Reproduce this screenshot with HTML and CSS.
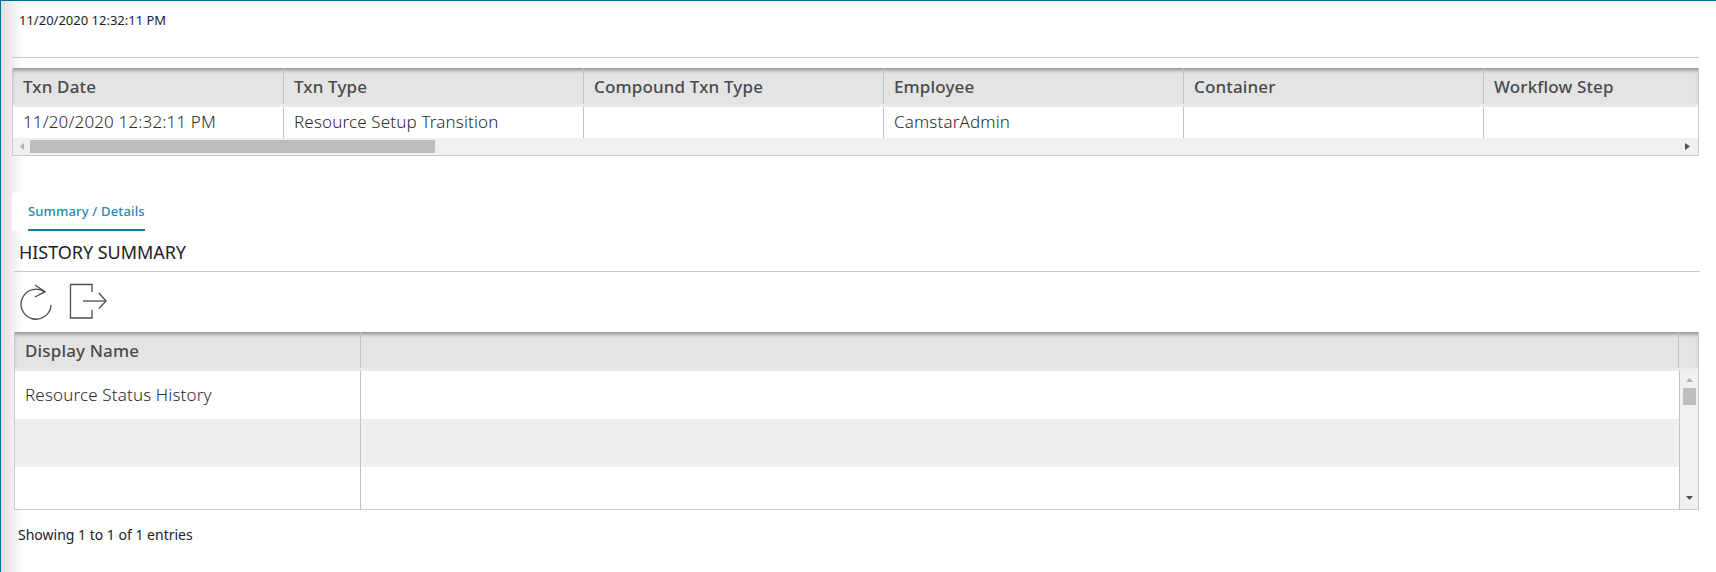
FILE: index.html
```html
<!DOCTYPE html>
<html>
  <head>
    <title>Resource History</title>
    <link rel="stylesheet" href="styles.css">
  </head>
  <body>
    <div class="page">
      <div class="stamp">11/20/2020 12:32:11 PM</div>
      <div class="rule rule-top"></div>

      <div class="grid txn-grid">
        <div class="row head">
          <div class="cell">Txn Date</div>
          <div class="cell">Txn Type</div>
          <div class="cell">Compound Txn Type</div>
          <div class="cell">Employee</div>
          <div class="cell">Container</div>
          <div class="cell last">Workflow Step</div>
        </div>
        <div class="row body-row">
          <div class="cell">11/20/2020 12:32:11 PM</div>
          <div class="cell">Resource Setup Transition</div>
          <div class="cell"></div>
          <div class="cell">CamstarAdmin</div>
          <div class="cell"></div>
          <div class="cell last"></div>
        </div>
        <div class="hscroll">
          <svg class="arrow" width="5" height="7" viewBox="0 0 5 7"><path d="M4 0V7L0 3.5Z" fill="#b0b0b0"/></svg>
          <div class="hthumb"></div>
          <svg class="arrow arrow-right" width="5" height="7" viewBox="0 0 5 7"><path d="M0 0V7L5 3.5Z" fill="#505050"/></svg>
        </div>
      </div>

      <div class="tabs">
        <a class="tab">Summary / Details</a>
      </div>
      <h2 class="section-title">HISTORY SUMMARY</h2>
      <div class="rule rule-section"></div>

      <div class="toolbar">
        <svg width="34" height="40" viewBox="0 0 34 40" fill="none" stroke="#4d4d4d" stroke-width="1.3">
          <path d="M26 9.2A15 15 0 1 0 32 22"/>
          <path d="M16 2L26 8.6L16 14"/>
        </svg>
        <svg width="40" height="40" viewBox="0 0 40 40" fill="none" stroke="#4d4d4d" stroke-width="1.3">
          <path d="M24 9V1.500H2.500V35H24V27"/>
          <path d="M15 18H38"/>
          <path d="M31 10L38 18L31 25.500"/>
        </svg>
      </div>

      <div class="grid summary-grid">
        <div class="summary-head">
          <div class="cell name-col">Display Name</div>
          <div class="cell"></div>
          <div class="head-end"></div>
        </div>
        <div class="summary-main">
          <div class="summary-rows">
            <div class="s-row">
              <div class="cell name-col">Resource Status History</div>
              <div class="cell"></div>
            </div>
            <div class="s-row alt">
              <div class="cell name-col"></div>
              <div class="cell"></div>
            </div>
            <div class="s-row short">
              <div class="cell name-col"></div>
              <div class="cell"></div>
            </div>
          </div>
          <div class="vscroll">
            <svg class="arrow" width="7" height="5" viewBox="0 0 7 5"><path d="M0 4H7L3.500 0Z" fill="#b0b0b0"/></svg>
            <div class="vthumb"></div>
            <svg class="arrow arrow-down" width="7" height="5" viewBox="0 0 7 5"><path d="M0 0H7L3.500 4Z" fill="#505050"/></svg>
          </div>
        </div>
      </div>

      <div class="entries">Showing 1 to 1 of 1 entries</div>
    </div>
  </body>
</html>
```

FILE: styles.css
```css
html,
body {
  margin: 0;
  height: 100%;
  overflow: hidden;
}
body {
  font-family: "Noto Sans", sans-serif;
  color: #333;
  background-color: #fff;
}
.page {
  box-sizing: border-box;
  height: 572px;
  border-top: 1px solid #006f94;
  border-left: 1px solid #006f94;
  background: linear-gradient(to right, #dedede, #fff 22px);
}
.stamp {
  height: 56px;
  padding: 10px 0 0 18px;
  box-sizing: border-box;
  font-size: 13px;
  line-height: 18px;
  color: #222;
}
.rule {
  height: 1px;
  background-color: #c9c9c9;
}
.rule-top {
  margin: 0 17px 0 11px;
}
.rule-section {
  margin: 0 16px 0 13px;
}

/* grids */
.grid {
  background-color: #fff;
  border: 1px solid #c9c9c9;
  border-top: none;
}
.txn-grid {
  width: 1685px;
  margin: 10px 0 0 11px;
}
.row {
  display: grid;
  grid-template-columns: 271px 300px 300px 300px 300px 1fr;
}
.cell {
  box-sizing: border-box;
  padding-left: 10px;
  border-right: 1px solid #c0c0c0;
  overflow: hidden;
  white-space: nowrap;
}
.cell.last {
  border-right: none;
}
.head,
.summary-head {
  height: 39px;
  border-bottom: 3px solid #ececec;
  box-sizing: border-box;
  background-color: #e4e4e4;
  box-shadow: inset 0 4px 4px -2px rgba(0, 0, 0, 0.4);
  font-size: 17px;
  font-weight: 500;
  letter-spacing: 0.15px;
  line-height: 38px;
  color: #4a4a4a;
}
.body-row {
  height: 31px;
  font-size: 17px;
  letter-spacing: 0.15px;
  line-height: 30px;
  font-weight: 300;
  color: #2b2b2b;
}
.hscroll {
  display: flex;
  align-items: center;
  height: 17px;
  background-color: #f0f0f0;
}
.hthumb {
  width: 405px;
  height: 13px;
  margin-left: 5px;
  background-color: #bdbdbd;
}
.arrow {
  display: block;
  flex: none;
}
.hscroll .arrow {
  margin-left: 7px;
}
.hscroll .arrow-right {
  margin-left: auto;
  margin-right: 8px;
}

/* tabs */
.tabs {
  display: flex;
  height: 39px;
  box-sizing: border-box;
  margin: 36px 0 0 11px;
  padding-left: 16px;
  background-color: #fff;
  border-top-left-radius: 4px;
}
.tab {
  align-self: flex-end;
  padding-bottom: 8px;
  border-bottom: 2px solid #15789f;
  font-size: 13px;
  font-weight: 500;
  letter-spacing: 0.15px;
  line-height: 20px;
  color: #2f86a8;
}
.section-title {
  margin: 0;
  height: 40px;
  padding-left: 18px;
  font-size: 18px;
  font-weight: 400;
  letter-spacing: -0.05px;
  line-height: 42px;
  color: #222;
}

/* toolbar */
.toolbar {
  display: flex;
  gap: 15px;
  height: 60px;
  box-sizing: border-box;
  padding: 11px 0 0 18px;
}

/* summary grid */
.summary-grid {
  width: 1683px;
  margin-left: 13px;
}
.summary-head {
  display: grid;
  grid-template-columns: 346px 1fr 19px;
}
.head-end {
  height: 36px;
}
.name-col {
  padding-left: 10px;
}
.summary-main {
  display: flex;
  height: 138px;
}
.summary-rows {
  flex: 1;
}
.s-row {
  display: grid;
  grid-template-columns: 346px 1fr;
  height: 48px;
  font-size: 17px;
  font-weight: 300;
  letter-spacing: 0.15px;
  line-height: 48px;
  color: #2b2b2b;
}
.s-row.alt {
  background-color: #efefef;
}
.s-row.short {
  height: 42px;
}
.s-row .cell:last-child {
  border-right: none;
}
.vscroll {
  display: flex;
  flex-direction: column;
  align-items: center;
  box-sizing: border-box;
  width: 19px;
  padding: 7px 0 8px;
  background-color: #f0f0f0;
  border-left: 1px solid #c0c0c0;
}
.vthumb {
  width: 13px;
  height: 17px;
  margin-top: 5px;
  background-color: #bdbdbd;
}
.vscroll .arrow-down {
  margin-top: auto;
}
.entries {
  padding: 16px 0 0 17px;
  font-size: 14px;
  line-height: 18px;
  color: #222;
}
```
